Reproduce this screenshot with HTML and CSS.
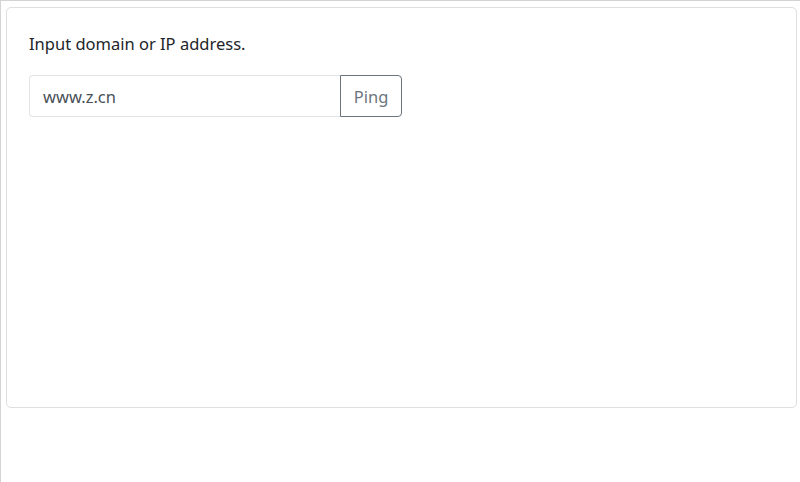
FILE: index.html
```html
<!DOCTYPE html>
<html>
<head>
<meta charset="utf-8">
<link rel="stylesheet" href="styles.css">
</head>
<body>
<div class="frame">
  <div class="card">
    <p class="label">Input domain or IP address.</p>
    <div class="input-group">
      <input class="form-control" type="text" value="www.z.cn">
      <button class="btn">Ping</button>
    </div>
  </div>
</div>
</body>
</html>
```

FILE: styles.css
```css
html, body {
  margin: 0;
  padding: 0;
  background: #fff;
}
body {
  font-family: "Noto Sans", "Open Sans", sans-serif;
  color: #212529;
  font-size: 16.5px;
}
.frame {
  height: 482px;
  box-sizing: border-box;
  border-top: 1px solid #d4d4d4;
  border-left: 1px solid #d4d4d4;
  padding: 6px 4px 0 5px;
}
.card {
  box-sizing: border-box;
  width: 791px;
  height: 401px;
  border: 1px solid #dfdfdf;
  border-radius: 5px;
  padding: 24px 22px;
}
.label {
  margin: 0 0 19px 0;
  line-height: 24px;
  font-size: 16.5px;
}
.input-group {
  display: flex;
  width: 373px;
}
.form-control {
  box-sizing: border-box;
  flex: 1;
  min-width: 0;
  height: 42px;
  margin: 0;
  border: 1px solid #e2e5e8;
  border-right: none;
  border-radius: 4px 0 0 4px;
  padding: 0 13px;
  font-family: inherit;
  font-size: 16.5px;
  color: #495057;
  outline: none;
}
.btn {
  box-sizing: border-box;
  width: 62px;
  height: 42px;
  margin: 0;
  border: 1px solid #6c757d;
  border-radius: 0 4px 4px 0;
  background: #fff;
  color: #6c757d;
  font-family: inherit;
  font-size: 16.5px;
  padding: 0;
}
```
